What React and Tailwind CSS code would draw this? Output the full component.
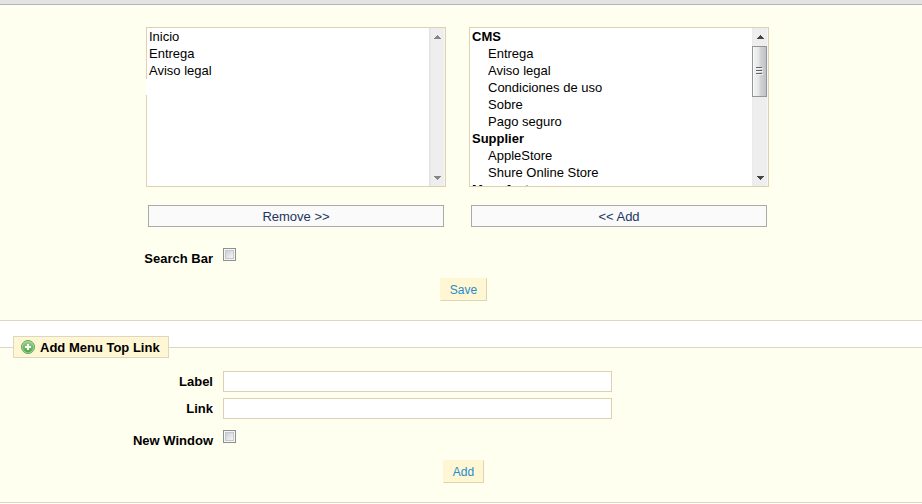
import React, { useState } from "react";

const ROW_HEIGHT = 17;

const pages = ["Inicio", "Entrega", "Aviso legal"];

const groups = [
  {
    name: "CMS",
    items: ["Entrega", "Aviso legal", "Condiciones de uso", "Sobre", "Pago seguro"],
  },
  { name: "Supplier", items: ["AppleStore", "Shure Online Store"] },
  { name: "Manufacturer", items: ["Apple Computer, Inc", "Shure Incorporated"] },
];

const ScrollBar = ({ active }) => (
  <svg width="16" height="158" viewBox="0 0 16 158" className="shrink-0" aria-hidden="true" shapeRendering="crispEdges">
    <defs>
      <linearGradient id="thumb" x1="0" x2="1" y1="0" y2="0">
        <stop offset="0" stopColor="#f5f5f5" />
        <stop offset="0.45" stopColor="#e6e6e8" />
        <stop offset="0.55" stopColor="#d3d4d6" />
        <stop offset="1" stopColor="#bfc0c3" />
      </linearGradient>
    </defs>
    <rect width="16" height="158" fill="#eeeeee" />
    <rect width="1" height="158" fill={active ? "#ebebeb" : "#e3e3e3"} />
    <rect x="1" width="1" height="158" fill={active ? "#eeeeee" : "#e8e8e8"} />
    <rect x="15" width="1" height="158" fill="#f6f6f6" />
    <g fill={active ? "#444444" : "#858585"}>
      <path d="M8 7h1v1h1v1h1v1h1v1H5v-1h1V9h1V8h1z" />
      <path d="M5 148h7v1h-1v1h-1v1H9v1H8v-1H7v-1H6v-1H5z" />
    </g>
    {active && (
      <g>
        <rect x="0.5" y="18.5" width="14" height="50" rx="1" fill="url(#thumb)" stroke="#959595" />
        <rect x="1" y="19" width="1" height="49" fill="#fbfbfb" />
        <path d="M4 39h6v1H4zM4 42h6v1H4zM4 45h6v1H4z" fill="#606468" />
        <path d="M4 40h7v1H4zM4 43h7v1H4zM4 46h7v1H4z" fill="#f4f4f4" />
      </g>
    )}
  </svg>
);

const ListBox = ({ label, active, children }) => (
  <div className="flex h-40 border border-[#e0d0b1] bg-white">
    <select
      multiple
      aria-label={label}
      className="h-full min-w-0 flex-1 overflow-y-auto bg-white text-[13px] text-black outline-none [scrollbar-width:none]"
    >
      {children}
    </select>
    <ScrollBar active={active} />
  </div>
);

const MoveButton = ({ children }) => (
  <button
    type="button"
    className="mx-[2px] mt-[18px] h-[22px] border border-[#aaaaaa] bg-[#fafafa] pt-px text-[13px] leading-4 text-[#1c355e]"
  >
    {children}
  </button>
);

const SubmitButton = ({ children }) => (
  <div className="mt-[11px] flex justify-center pl-[5px]">
    <button
      type="submit"
      className="h-[23px] border border-t-[#fff6d3] border-r-[#dfd5af] border-b-[#dfd5af] border-l-[#fff6d3] bg-[#fff6d3] px-[9px] text-xs text-[#268ccd]"
    >
      {children}
    </button>
  </div>
);

const CheckRow = ({ id, label, checked, onChange }) => (
  <div className="flex gap-[10px]">
    <label htmlFor={id} className="mt-[3px] w-[213px] text-right font-bold leading-4">
      {label}
    </label>
    <input
      id={id}
      type="checkbox"
      checked={checked}
      onChange={(e) => onChange(e.target.checked)}
      className="size-[13px] appearance-none border border-[#8e8f8f] bg-[#f6f6f6] p-px before:block before:size-[9px] before:border before:border-[#c4c8cd] before:bg-linear-to-br before:from-[#cbcfd5] before:to-[#f6f6f6] checked:before:from-[#4b6a9b] checked:before:to-[#4b6a9b]"
    />
  </div>
);

const TextRow = ({ id, label }) => (
  <div className="flex items-center gap-[10px]">
    <label htmlFor={id} className="w-[213px] shrink-0 text-right font-bold leading-4">
      {label}
    </label>
    <input
      id={id}
      type="text"
      className="h-[21px] w-full max-w-[389px] border border-[#e0d0b1] bg-white px-1 text-xs outline-none"
    />
  </div>
);

const AddIcon = () => (
  <svg width="16" height="16" viewBox="0 0 16 16" aria-hidden="true">
    <defs>
      <linearGradient id="disc" x1="0" x2="0" y1="0" y2="1">
        <stop offset="0" stopColor="#9ad08a" />
        <stop offset="1" stopColor="#4da64a" />
      </linearGradient>
    </defs>
    <circle cx="8" cy="8" r="6.5" fill="#b9dcab" stroke="#5aa653" />
    <circle cx="8" cy="8" r="5.4" fill="url(#disc)" />
    <path d="M7 5h2v2h2v2H9v2H7V9H5V7h2z" fill="#ffffff" />
  </svg>
);

const App = () => {
  const [searchBar, setSearchBar] = useState(false);
  const [newWindow, setNewWindow] = useState(false);

  return (
    <main className="bg-white font-['Liberation_Sans',Arial,sans-serif] text-[13px] text-black">
      <div className="h-[5px] border-b border-[#b4b5c0] bg-[#e3e3e3]" />

      <form onSubmit={(e) => e.preventDefault()}>
        <fieldset className="border-b border-[#dfd5c3] bg-[#fffff0] pt-[22px] pb-[19px]">
          <div className="flex gap-[23px] pl-[146px]">
            <div className="relative flex max-w-[300px] flex-1 flex-col">
              <ListBox label="Menu items">
                {pages.map((page) => (
                  <option key={page} className="px-[2px] py-px">
                    {page}
                  </option>
                ))}
              </ListBox>
              <span className="absolute top-[52px] left-0 h-4 w-px bg-white" />
              <MoveButton>Remove &gt;&gt;</MoveButton>
            </div>
            <div className="flex max-w-[300px] flex-1 flex-col">
              <ListBox label="Available items" active>
                {groups.map((group) => (
                  <optgroup
                    key={group.name}
                    label={group.name}
                    className="pt-px"
                    style={{ minHeight: ROW_HEIGHT * (group.items.length + 1) }}
                  >
                    {group.items.map((item) => (
                      <option key={item} className="py-px pl-[18px] font-normal first:pt-0">
                        {item}
                      </option>
                    ))}
                  </optgroup>
                ))}
              </ListBox>
              <MoveButton>&lt;&lt; Add</MoveButton>
            </div>
          </div>
          <div className="mt-[21px]">
            <CheckRow id="search-bar" label="Search Bar" checked={searchBar} onChange={setSearchBar} />
          </div>
          <SubmitButton>Save</SubmitButton>
        </fieldset>
      </form>

      <form className="mt-[15px]" onSubmit={(e) => e.preventDefault()}>
        <fieldset className="border-y border-[#dfd5c3] bg-[#fffff0] pb-[19px]">
          <legend className="ml-[13px] flex h-[22px] items-center gap-1 border border-[#dfd5c3] bg-[#fff6d3] pr-2 pl-[6px] font-bold">
            <AddIcon />
            <span className="pt-px">Add Menu Top Link</span>
          </legend>
          <div className="flex flex-col gap-[6px] pt-[13px] pb-[11px]">
            <TextRow id="link-label" label="Label" />
            <TextRow id="link-url" label="Link" />
          </div>
          <CheckRow id="new-window" label="New Window" checked={newWindow} onChange={setNewWindow} />
          <SubmitButton>Add</SubmitButton>
        </fieldset>
      </form>
    </main>
  );
};

export default App;
